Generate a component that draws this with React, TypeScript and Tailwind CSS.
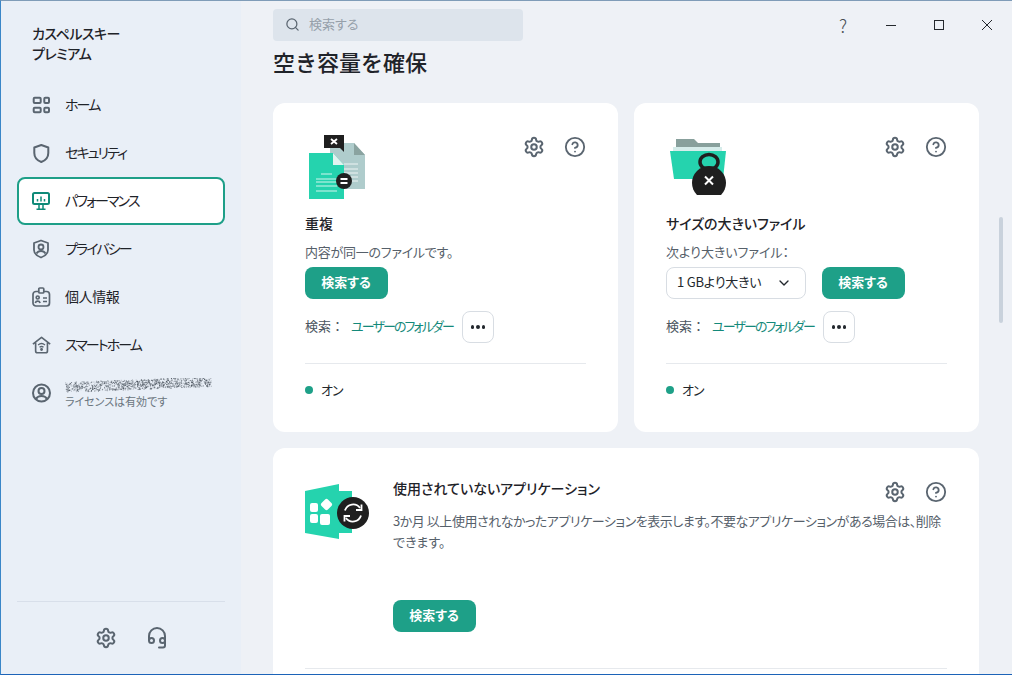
import { ChevronDown, CircleHelp, Search, Settings } from 'lucide-react'
import type { ReactNode } from 'react'

const iconGray = '#5a6570'

function HomeIcon() {
  return (
    <svg width="20" height="20" viewBox="0 0 20 20" fill="none" stroke={iconGray} strokeWidth="2">
      <rect x="1.7" y="2.7" width="7" height="5.400" rx="1" />
      <rect x="12.300" y="2.700" width="4.700" height="5.400" rx="1" />
      <rect x="1.700" y="12.700" width="7" height="4.600" rx="1" />
      <rect x="12.300" y="12.700" width="4.700" height="4.600" rx="1" />
    </svg>
  )
}

function ShieldIcon() {
  return (
    <svg width="20" height="20" viewBox="0 0 20 20" fill="none" stroke={iconGray} strokeWidth="2" strokeLinejoin="round">
      <path d="M9.300 2 16.300 4.500V10c0 4.500-3 7.500-7 9C5.300 17.500 2.300 14.500 2.300 10V4.500Z" />
    </svg>
  )
}

function MonitorIcon() {
  return (
    <svg width="20" height="20" viewBox="0 0 20 20" fill="none" stroke="#0e8a78" strokeWidth="2">
      <rect x="1" y="2" width="16" height="11" rx="1.500" />
      <path d="M5.500 10.500V8M9 10.500V5.500M12.500 10.500V8M4.500 18.200h9M7 13v5M11 13v5" strokeWidth="1.500" />
    </svg>
  )
}

function PrivacyIcon() {
  return (
    <svg width="20" height="20" viewBox="0 0 20 20" fill="none" stroke={iconGray} strokeWidth="1.800" strokeLinejoin="round">
      <path d="M9 1.500 16 4v7c0 3.500-3 6-7 7.500C5 17 2 14.500 2 11V4Z" />
      <circle cx="9" cy="8" r="2.500" />
      <path d="M4.500 14.500c1-1.800 2.500-2.500 4.500-2.500s3.500.7 4.500 2.500" />
    </svg>
  )
}

function IdIcon() {
  return (
    <svg width="20" height="20" viewBox="0 0 20 20" fill="none" stroke={iconGray} strokeWidth="1.700">
      <rect x="1" y="4.500" width="16.500" height="14.500" rx="3" />
      <rect x="6.800" y="1" width="5" height="5" rx="1" fill="#e9eff7" />
      <circle cx="5.700" cy="10.500" r="1.500" />
      <path d="M3.300 16c.4-1.300 1.300-1.800 2.400-1.800s2 .5 2.400 1.800M11 11h4M11 14.500h4" />
    </svg>
  )
}

function SmartHomeIcon() {
  return (
    <svg width="22" height="20" viewBox="0 0 22 20" fill="none" stroke={iconGray} strokeWidth="1.800" strokeLinejoin="round">
      <path d="M1 9 10.500 1.500 20 9M4 7.500v9a2 2 0 0 0 2 2h9a2 2 0 0 0 2-2v-9" />
      <path d="M6.700 10c2.300-2 5.300-2 7.600 0M8.300 12.500c1.300-1 3.100-1 4.400 0" strokeWidth="1.400" />
      <circle cx="10.500" cy="15" r="0.700" fill={iconGray} />
    </svg>
  )
}

function UserIcon() {
  return (
    <svg width="20" height="20" viewBox="0 0 20 20" fill="none" stroke={iconGray} strokeWidth="2">
      <circle cx="9.500" cy="10" r="8.500" />
      <circle cx="9.500" cy="8" r="3" />
      <path d="M4 16c1-2 3-3 5.500-3s4.500 1 5.500 3" />
    </svg>
  )
}

function HeadsetIcon() {
  return (
    <svg width="20" height="22" viewBox="0 0 20 22" fill="none" stroke={iconGray} strokeWidth="2" strokeLinecap="round">
      <path d="M2 13V9a8 8 0 0 1 16 0v4" />
      <circle cx="4.500" cy="13.500" r="2.500" />
      <circle cx="15.500" cy="13.500" r="2.500" />
      <path d="M18 14v4.500a2 2 0 0 1-2 2h-4" />
    </svg>
  )
}

function NoiseText() {
  const dots = []
  for (let i = 0; i < 1000; i++) {
    const r1 = Math.abs(Math.sin(i * 12.9898) * 43758.5453) % 1
    const r2 = Math.abs(Math.sin(i * 78.233) * 12543.1234) % 1
    const r3 = Math.abs(Math.sin(i * 39.425) * 24634.6345) % 1
    const x = r1 * 146
    const y = 9 + (r2 - 0.5) * 10 - x * 0.04
    dots.push(<rect key={i} x={x} y={y} width="1" height="1" fill="#3f4852" opacity={0.15 + r3 * 0.7} />)
  }
  return (
    <svg width="150" height="16" viewBox="0 0 150 16">
      {dots}
    </svg>
  )
}

function DuplicatesArt() {
  return (
    <svg width="64" height="68" viewBox="0 0 64 68">
      <path d="M25 8H49L60 20V54H25Z" fill="#afcccc" />
      <path d="M49 8 60 20H49Z" fill="#8aa3a0" />
      <path d="M39 29h14M39 34h14M39 38h14M39 42h14M39 46h14" stroke="#fff" strokeWidth="0.800" />
      <path d="M4 18H28L39 30V64H4Z" fill="#25d3ae" />
      <path d="M28 18 39 30H28Z" fill="#e2f3f0" />
      <path d="M16 39h11M11 44h21M11 47h21M11 51h21M11 56h21" stroke="#fff" strokeWidth="0.800" />
      <path d="M19 0H39V17L35 13H19Z" fill="#1f1f1f" />
      <path d="M26 4 32 9M32 4 26 9" stroke="#fff" strokeWidth="1.800" />
      <circle cx="39" cy="46" r="8" fill="#1f1f1f" />
      <path d="M35.500 44H42.500M35.500 48H42.500" stroke="#fff" strokeWidth="1.800" />
    </svg>
  )
}

function FolderArt() {
  return (
    <svg width="64" height="62" viewBox="0 0 64 62">
      <path d="M10 4H28L32 8H54V14H10Z" fill="#88a09c" />
      <path d="M7 12H56V16H7Z" fill="#d5ecea" />
      <path d="M4 16H60L57 44H8Z" fill="#25d3ae" />
      <ellipse cx="43" cy="27" rx="9" ry="7.500" fill="none" stroke="#1f1f1f" strokeWidth="3.500" />
      <path d="M31 60a17 17 0 1 1 24 0Z" fill="#1f1f1f" />
      <path d="M39 41.500 47 49.500M47 41.500 39 49.500" stroke="#fff" strokeWidth="2" />
    </svg>
  )
}

function AppsArt() {
  return (
    <svg width="66" height="56" viewBox="0 0 66 56">
      <path d="M34 7H47V49H34Z" fill="#25d3ae" />
      <path d="M0 7 34 0V55L0 49Z" fill="#25d3ae" />
      <circle cx="48" cy="29" r="16" fill="#1f1f1f" />
      <rect x="5" y="19" width="8" height="9" rx="2" fill="#fff" />
      <rect x="17" y="16" width="9" height="9" rx="2" fill="#fff" transform="rotate(45 21.500 20.500)" />
      <rect x="5" y="30" width="8" height="9" rx="2" fill="#fff" />
      <rect x="15" y="30" width="10" height="11" rx="2" fill="#fff" />
      <path d="M40 26.500a8.500 8.500 0 0 1 15-2.500M56 31.500a8.500 8.500 0 0 1-15 2.500" fill="none" stroke="#fff" strokeWidth="1.800" />
      <path d="M56.500 20.500V26H51M39.500 37.500V32H45" fill="none" stroke="#fff" strokeWidth="1.800" />
    </svg>
  )
}

function NavItem({ icon, label, active, kanji }: { icon: ReactNode; label: string; active?: boolean; kanji?: boolean }) {
  return (
    <div
      className={
        active
          ? 'h-12 mx-[16px] pl-[13px] flex items-center gap-[13px] rounded-lg border-2 border-[#1e9f88] bg-white'
          : 'h-12 mx-[16px] pl-[15px] flex items-center gap-[13px]'
      }
    >
      <span className="w-5 flex justify-center shrink-0">{icon}</span>
      <span className={kanji ? 'text-[14px] text-[#1f2329] -mt-[2px] tracking-[-0.4px]' : 'text-[14px] text-[#1f2329] -mt-[2px] tracking-[-1.9px]'}>
        {label}
      </span>
    </div>
  )
}

function CardTools() {
  return (
    <div className="flex items-start gap-[19px] mt-[1px] text-[#5a6570]">
      <Settings size={22} strokeWidth={2.200} />
      <CircleHelp size={22} strokeWidth={2} />
    </div>
  )
}

function ScanButton() {
  return (
    <button className="w-[83px] h-8 pb-[2px] pr-[1px] rounded-lg bg-[#1ea088] text-white text-[13px] font-bold shrink-0">
      検索する
    </button>
  )
}

function SearchScope() {
  return (
    <div className="mt-3 flex items-center h-8 text-[13px]">
      <span className="w-[46px] pb-[2px] text-[#4b5560] [font-feature-settings:normal]">検索：</span>
      <span className="text-[#14897a] w-[111px] pb-[2px] whitespace-nowrap tracking-[-1.9px]">ユーザーのフォルダー</span>
      <button className="w-8 h-8 rounded-lg border border-[#d8dde3] flex items-center justify-center gap-[2px]">
        <i className="w-[3.5px] h-[3.5px] rounded-full bg-[#23282e]" />
        <i className="w-[3.5px] h-[3.5px] rounded-full bg-[#23282e]" />
        <i className="w-[3.5px] h-[3.5px] rounded-full bg-[#23282e]" />
      </button>
    </div>
  )
}

function CardStatus() {
  return (
    <>
      <div className="mt-5 border-t border-[#e6e9ed]" />
      <div className="mt-4 flex items-center gap-2 text-[13px] text-[#23282e] h-5 tracking-[-1px]">
        <span className="w-2 h-2 rounded-full bg-[#1ea088]" />
        オン
      </div>
    </>
  )
}

export default function App() {
  return (
    <div className="w-[1012px] h-[675px] flex overflow-hidden relative border-t border-t-[#7f9cb8] border-l border-l-[#3a86c8] border-b border-b-[#1c63b8] bg-[#eef1f6] font-['Noto_Sans_CJK_JP',sans-serif] [font-feature-settings:'palt'] text-[#1f2329]">
      <aside className="w-[240px] shrink-0 flex flex-col bg-[#e9eff7]">
        <div className="pl-[31px] pt-[22px] text-[14px] leading-5 h-[80px] font-medium tracking-[-0.5px]">
          カスペルスキー
          <br />
          プレミアム
        </div>
        <nav className="flex flex-col">
          <NavItem icon={<HomeIcon />} label="ホーム" />
          <NavItem icon={<ShieldIcon />} label="セキュリティ" />
          <NavItem icon={<MonitorIcon />} label="パフォーマンス" active />
          <NavItem icon={<PrivacyIcon />} label="プライバシー" />
          <NavItem icon={<IdIcon />} label="個人情報" kanji />
          <NavItem icon={<SmartHomeIcon />} label="スマートホーム" />
          <div className="h-12 mx-[16px] pl-[15px] flex items-center gap-[13px]">
            <span className="w-5 shrink-0">
              <UserIcon />
            </span>
            <div className="flex flex-col -mt-[1px]">
              <NoiseText />
              <span className="text-[11px] leading-[14px] text-[#6b7680]">ライセンスは有効です</span>
            </div>
          </div>
        </nav>
        <div className="mt-auto mx-[16px] border-t border-[#d8dfea] h-[72px] flex items-center justify-center gap-[30px] mb-[1px] pl-[19px]">
          <Settings size={22} color={iconGray} strokeWidth={2.200} />
          <HeadsetIcon />
        </div>
      </aside>
      <main className="flex-1 min-w-0 pl-8 flex flex-col">
        <header className="flex items-start shrink-0 h-[42px] pt-2">
          <div className="w-[250px] h-8 rounded bg-[#dde4ec] flex items-center gap-[9px] pl-3 pb-[2px] text-[13px] text-[#96a0aa]">
            <Search size={15} color="#5a6570" strokeWidth={2} />
            検索する
          </div>
          <div className="ml-auto flex items-center h-8 text-[#24282d] pr-[1px]">
            <span className="w-12 text-center text-[18px] font-light text-[#4a4f55]">?</span>
            <span className="w-12 flex justify-center">
              <svg width="10" height="10" viewBox="0 0 10 10" stroke="currentColor" strokeWidth="1">
                <path d="M0 5.500H10" />
              </svg>
            </span>
            <span className="w-12 flex justify-center">
              <svg width="10" height="10" viewBox="0 0 10 10" fill="none" stroke="currentColor" strokeWidth="1">
                <rect x="0.500" y="0.500" width="9" height="9" />
              </svg>
            </span>
            <span className="w-12 flex justify-center">
              <svg width="10" height="10" viewBox="0 0 10 10" stroke="currentColor" strokeWidth="1">
                <path d="M0 0 10 10M10 0 0 10" />
              </svg>
            </span>
          </div>
        </header>
        <h1 className="text-[22px] leading-[30px] font-medium mt-[3px] h-[57px] shrink-0 [font-feature-settings:normal]">空き容量を確保</h1>
        <div className="w-[706px] shrink-0 flex flex-col gap-4">
          <div className="grid grid-cols-2 gap-4">
            <section className="h-[329px] rounded-xl bg-white px-8 pt-8">
              <div className="flex justify-between h-[74px]">
                <DuplicatesArt />
                <CardTools />
              </div>
              <h2 className="text-[14px] leading-6 font-medium mt-[2px]">重複</h2>
              <p className="text-[13px] leading-5 text-[#56606a] mt-[7px] tracking-[-0.25px]">内容が同一のファイルです。</p>
              <div className="mt-[5px]">
                <ScanButton />
              </div>
              <SearchScope />
              <CardStatus />
            </section>
            <section className="h-[329px] rounded-xl bg-white px-8 pt-8">
              <div className="flex justify-between h-[74px]">
                <FolderArt />
                <CardTools />
              </div>
              <h2 className="text-[14px] leading-6 font-medium mt-[2px]">サイズの大きいファイル</h2>
              <p className="text-[13px] leading-5 text-[#56606a] mt-[7px]">次より大きいファイル：</p>
              <div className="mt-[5px] flex gap-4">
                <div className="w-[140px] h-8 pb-[3px] rounded-lg border border-[#d8dde3] flex items-center justify-between pl-[10px] pr-[13px] text-[13px] text-[#23282e] tracking-[-0.2px]">
                  1 GBより大きい
                  <ChevronDown size={16} strokeWidth={2} className="mt-[2px]" />
                </div>
                <ScanButton />
              </div>
              <SearchScope />
              <CardStatus />
            </section>
          </div>
          <section className="h-[300px] rounded-xl bg-white px-8 pt-8">
            <div className="flex">
              <div className="w-[88px] shrink-0 pt-1">
                <AppsArt />
              </div>
              <div className="flex-1 min-w-0">
                <div className="flex justify-between items-start h-6">
                  <h2 className="text-[14px] leading-5 font-medium -mt-[2px]">使用されていないアプリケーション</h2>
                  <CardTools />
                </div>
                <p className="text-[13px] leading-[21px] text-[#56606a] mt-[6px] whitespace-nowrap">
                  <span className="tracking-[-0.47px]">3か月 以上使用されなかったアプリケーションを表示します。不要なアプリケーションがある場合は、削除</span>
                  <br />
                  できます。
                </p>
                <div className="mt-[48px]">
                  <ScanButton />
                </div>
              </div>
            </div>
            <div className="mt-9 border-t border-[#e6e9ed]" />
          </section>
        </div>
      </main>
      <div className="absolute left-[998px] top-[216px] w-[4px] h-[106px] rounded-full bg-[#c9d2dc]" />
    </div>
  )
}
